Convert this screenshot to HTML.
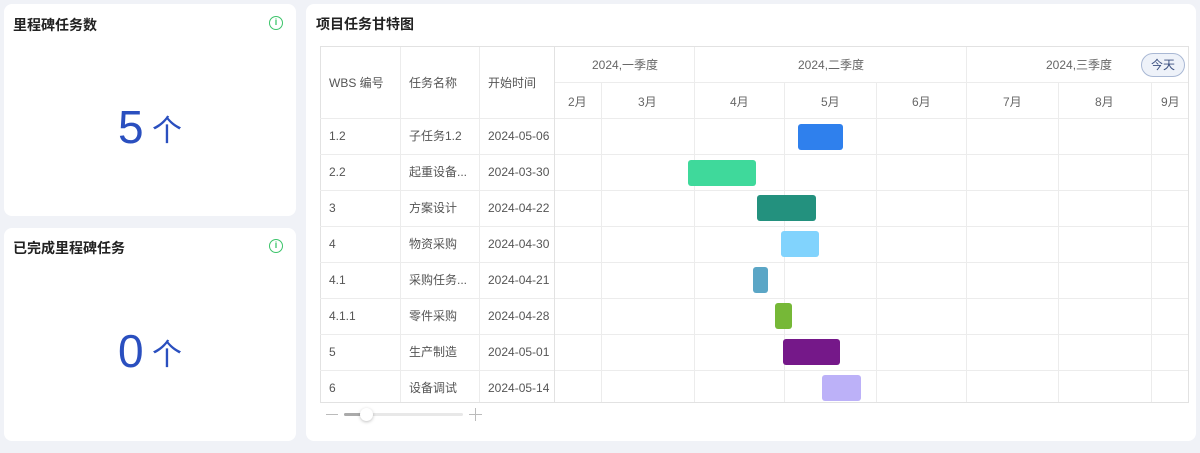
<!DOCTYPE html>
<html><head><meta charset="utf-8"><style>
*{margin:0;padding:0;box-sizing:border-box}
body{width:1200px;height:453px;background:#f0f2f7;font-family:"Liberation Sans","Noto Sans CJK SC",sans-serif;position:relative;overflow:hidden;color:#555}
.card{position:absolute;background:#fff;border-radius:8px}
.t{position:absolute;font-size:14px;font-weight:bold;color:#222;line-height:18px}
.info{position:absolute;width:14px;height:14px;border:1.3px solid #3cc46a;border-radius:50%;color:#3cc46a;font-size:9px;font-weight:bold;text-align:center;line-height:11px}
.big{position:absolute;color:#2a4fbf;font-size:46px;width:292px;text-align:center;line-height:56px}
.big span{font-size:30px;vertical-align:2px}
.a{position:absolute;font-size:12px;color:#555;white-space:nowrap;line-height:16px;height:16px}
.h{position:absolute;background:#ececec;height:1px}
.v{position:absolute;background:#ececec;width:1px}
.bar{position:absolute;height:26px;border-radius:3px}
</style></head><body>
<div class="card" style="left:4px;top:4px;width:292px;height:212px"></div>
<div class="t" style="left:13px;top:16px">里程碑任务数</div>
<div class="info" style="left:269px;top:16px">i</div>
<div class="big" style="left:4px;top:99px">5<span> 个</span></div>
<div class="card" style="left:4px;top:228px;width:292px;height:213px"></div>
<div class="t" style="left:13px;top:239px">已完成里程碑任务</div>
<div class="info" style="left:269px;top:239px">i</div>
<div class="big" style="left:4px;top:323px">0<span> 个</span></div>
<div class="card" style="left:306px;top:4px;width:890px;height:437px"></div>
<div class="t" style="left:316px;top:15px">项目任务甘特图</div>
<div style="position:absolute;left:320px;top:46px;width:869px;height:357px;border:1px solid #e2e2e2"></div>
<div class="h" style="left:555px;top:82px;width:633px"></div>
<div class="h" style="left:320px;top:118px;width:868px"></div>
<div class="h" style="left:320px;top:154px;width:868px"></div>
<div class="h" style="left:320px;top:190px;width:868px"></div>
<div class="h" style="left:320px;top:226px;width:868px"></div>
<div class="h" style="left:320px;top:262px;width:868px"></div>
<div class="h" style="left:320px;top:298px;width:868px"></div>
<div class="h" style="left:320px;top:334px;width:868px"></div>
<div class="h" style="left:320px;top:370px;width:868px"></div>
<div class="v" style="left:400px;top:47px;height:355px"></div>
<div class="v" style="left:479px;top:47px;height:355px"></div>
<div class="v" style="left:554px;top:47px;height:355px;background:#e2e2e2"></div>
<div class="v" style="left:601px;top:83px;height:319px"></div>
<div class="v" style="left:694px;top:47px;height:355px"></div>
<div class="v" style="left:784px;top:83px;height:319px"></div>
<div class="v" style="left:876px;top:83px;height:319px"></div>
<div class="v" style="left:966px;top:47px;height:355px"></div>
<div class="v" style="left:1058px;top:83px;height:319px"></div>
<div class="v" style="left:1151px;top:83px;height:319px"></div>
<div class="a" style="left:329px;top:75px">WBS 编号</div>
<div class="a" style="left:409px;top:75px">任务名称</div>
<div class="a" style="left:488px;top:75px">开始时间</div>
<div class="a" style="left:592px;top:57px;color:#666">2024,一季度</div>
<div class="a" style="left:798px;top:57px;color:#666">2024,二季度</div>
<div class="a" style="left:1046px;top:57px;color:#666">2024,三季度</div>
<div style="position:absolute;left:1141px;top:53px;width:44px;height:24px;border:1px solid #a9b8d4;border-radius:12px;background:#eef2f9;font-size:12px;color:#3a4f80;text-align:center;line-height:22px">今天</div>
<div class="a" style="left:568px;top:94px;color:#666">2月</div>
<div class="a" style="left:638px;top:94px;color:#666">3月</div>
<div class="a" style="left:730px;top:94px;color:#666">4月</div>
<div class="a" style="left:821px;top:94px;color:#666">5月</div>
<div class="a" style="left:912px;top:94px;color:#666">6月</div>
<div class="a" style="left:1003px;top:94px;color:#666">7月</div>
<div class="a" style="left:1095px;top:94px;color:#666">8月</div>
<div class="a" style="left:1161px;top:94px;color:#666">9月</div>
<div class="a" style="left:329px;top:128px">1.2</div><div class="a" style="left:409px;top:128px">子任务1.2</div><div class="a" style="left:488px;top:128px">2024-05-06</div>
<div class="a" style="left:329px;top:164px">2.2</div><div class="a" style="left:409px;top:164px">起重设备...</div><div class="a" style="left:488px;top:164px">2024-03-30</div>
<div class="a" style="left:329px;top:200px">3</div><div class="a" style="left:409px;top:200px">方案设计</div><div class="a" style="left:488px;top:200px">2024-04-22</div>
<div class="a" style="left:329px;top:236px">4</div><div class="a" style="left:409px;top:236px">物资采购</div><div class="a" style="left:488px;top:236px">2024-04-30</div>
<div class="a" style="left:329px;top:272px">4.1</div><div class="a" style="left:409px;top:272px">采购任务...</div><div class="a" style="left:488px;top:272px">2024-04-21</div>
<div class="a" style="left:329px;top:308px">4.1.1</div><div class="a" style="left:409px;top:308px">零件采购</div><div class="a" style="left:488px;top:308px">2024-04-28</div>
<div class="a" style="left:329px;top:344px">5</div><div class="a" style="left:409px;top:344px">生产制造</div><div class="a" style="left:488px;top:344px">2024-05-01</div>
<div class="a" style="left:329px;top:380px">6</div><div class="a" style="left:409px;top:380px">设备调试</div><div class="a" style="left:488px;top:380px">2024-05-14</div>
<div class="bar" style="left:798px;top:124px;width:45px;background:#2f80ed"></div>
<div class="bar" style="left:688px;top:160px;width:68px;background:#3fd99b"></div>
<div class="bar" style="left:757px;top:195px;width:59px;background:#23917e"></div>
<div class="bar" style="left:781px;top:231px;width:38px;background:#81d3fd"></div>
<div class="bar" style="left:753px;top:267px;width:15px;background:#5ba6c6"></div>
<div class="bar" style="left:775px;top:303px;width:17px;background:#76b837"></div>
<div class="bar" style="left:783px;top:339px;width:57px;background:#751889"></div>
<div class="bar" style="left:822px;top:375px;width:39px;background:#bcb1f8"></div>
<div style="position:absolute;left:326px;top:414px;width:12px;height:1px;background:#bbb"></div>
<div style="position:absolute;left:344px;top:413px;width:119px;height:3px;background:#e8e8e8;border-radius:2px"></div>
<div style="position:absolute;left:344px;top:413px;width:20px;height:3px;background:#aaa;border-radius:2px"></div>
<div style="position:absolute;left:360px;top:408px;width:13px;height:13px;border-radius:50%;background:#fff;box-shadow:0 1px 3px rgba(0,0,0,.25)"></div>
<div style="position:absolute;left:469px;top:414px;width:13px;height:1px;background:#bbb"></div>
<div style="position:absolute;left:475px;top:408px;width:1px;height:13px;background:#bbb"></div>
</body></html>
